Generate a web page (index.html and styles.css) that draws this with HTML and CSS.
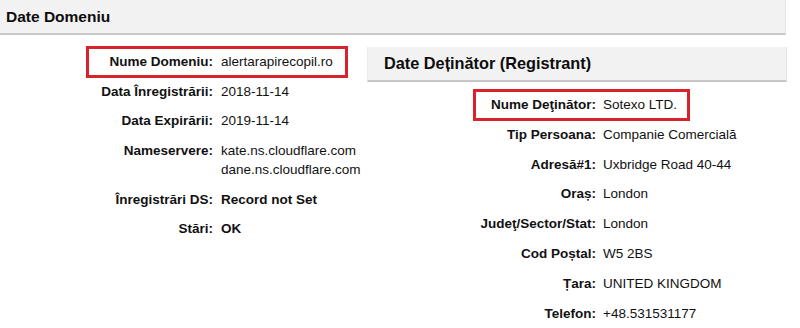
FILE: index.html
```html
<!DOCTYPE html>
<html lang="ro">
<head>
<meta charset="utf-8">
<title>Date Domeniu</title>
<link rel="stylesheet" href="styles.css">
</head>
<body>
<div class="page">
  <div class="section-head">Date Domeniu</div>
  <div class="cols">
    <div class="left">
      <div class="kv kv-left">
        <div class="k">Nume Domeniu:</div><div class="v">alertarapirecopil.ro</div>
        <div class="k">Data Înregistrării:</div><div class="v">2018-11-14</div>
        <div class="k">Data Expirării:</div><div class="v">2019-11-14</div>
        <div class="k">Nameservere:</div><div class="v">kate.ns.cloudflare.com<br>dane.ns.cloudflare.com</div>
        <div class="k">Înregistrări DS:</div><div class="v strong">Record not Set</div>
        <div class="k">Stări:</div><div class="v strong">OK</div>
      </div>
      <span class="mark mark-left"></span>
    </div>
    <div class="right">
      <div class="section-head sub">Date Deținător (Registrant)</div>
      <div class="kv kv-right">
        <div class="k">Nume Deţinător:</div><div class="v">Sotexo LTD.</div>
        <div class="k">Tip Persoana:</div><div class="v">Companie Comercială</div>
        <div class="k">Adresă#1:</div><div class="v">Uxbridge Road 40-44</div>
        <div class="k">Oraș:</div><div class="v">London</div>
        <div class="k">Judeţ/Sector/Stat:</div><div class="v">London</div>
        <div class="k">Cod Poștal:</div><div class="v">W5 2BS</div>
        <div class="k">Țara:</div><div class="v">UNITED KINGDOM</div>
        <div class="k">Telefon:</div><div class="v">+48.531531177</div>
      </div>
      <span class="mark mark-right"></span>
    </div>
  </div>
</div>
</body>
</html>
```
FILE: styles.css
```css
html, body {
  margin: 0;
  padding: 0;
  background: #ffffff;
}
body {
  font-family: "Liberation Sans", Arial, sans-serif;
  color: #111111;
  font-size: 13.5px;
}
.page {
  width: 800px;
  height: 328px;
  overflow: hidden;
}
.section-head {
  box-sizing: border-box;
  width: 786px;
  height: 35px;
  line-height: 33px;
  padding-left: 6px;
  background: #f2f2f2;
  border-bottom: 2px solid #c8c8c8;
  border-right: 1px solid #e4e4e4;
  font-weight: bold;
  font-size: 15.5px;
  color: #0d0d0d;
}
.section-head.sub {
  width: 420px;
  padding-left: 16px;
  font-size: 16.3px;
  border-left: 1px solid #ebebeb;
}
.cols {
  display: flex;
  margin-top: 12px;
}
.left {
  position: relative;
  width: 367px;
  flex: none;
}
.right {
  position: relative;
  flex: none;
}
.kv {
  display: grid;
  line-height: 19.5px;
}
.kv-left {
  grid-template-columns: 213px auto;
  column-gap: 8px;
}
.kv-right {
  margin-top: 8px;
  line-height: 19.8px;
  grid-template-columns: 229px auto;
  column-gap: 7px;
}
.k {
  padding: 5px 0;
  text-align: right;
  font-weight: bold;
  white-space: nowrap;
}
.v {
  padding: 5px 0;
  white-space: nowrap;
}
.v.strong {
  font-weight: bold;
}
.mark {
  position: absolute;
  box-sizing: border-box;
  border: 3px solid #d8232c;
  height: 32px;
}
.mark-left {
  left: 86px;
  top: -1px;
  width: 262px;
}
.mark-right {
  left: 106px;
  top: 42px;
  width: 217px;
}
```
